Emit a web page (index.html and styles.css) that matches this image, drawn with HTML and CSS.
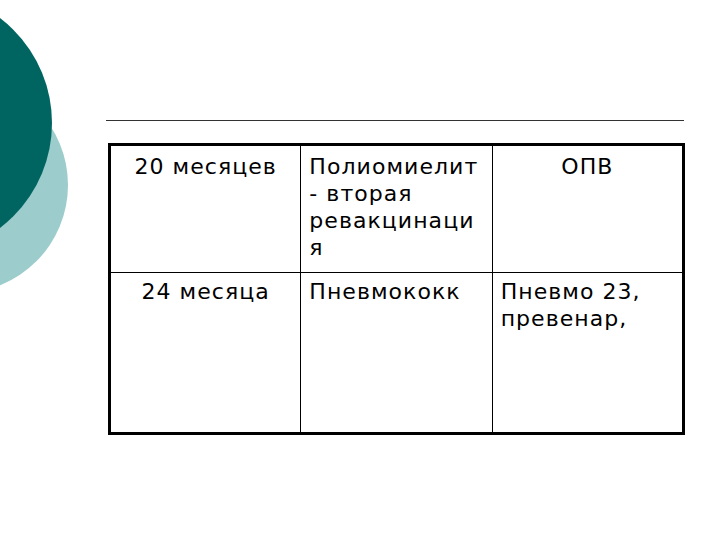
FILE: index.html
```html
<!DOCTYPE html>
<html lang="ru">
<head>
<meta charset="utf-8">
<title>Вакцинация</title>
<link rel="stylesheet" href="styles.css">
</head>
<body>
<div class="slide">
  <div class="circle circle-light"></div>
  <div class="circle circle-dark"></div>
  <div class="content">
    <div class="rule"></div>
    <table class="grid">
      <tr class="row-1">
        <td class="c-age">20 месяцев</td>
        <td class="c-left">Полиомиелит<br>- вторая<br>ревакцинаци<br>я</td>
        <td class="c-center">ОПВ</td>
      </tr>
      <tr class="row-2">
        <td class="c-age">24 месяца</td>
        <td class="c-left">Пневмококк</td>
        <td class="c-left">Пневмо 23,<br>превенар,</td>
      </tr>
    </table>
  </div>
</div>
</body>
</html>
```
FILE: styles.css
```css
html, body {
  margin: 0;
  padding: 0;
  background: #ffffff;
}
.slide {
  position: relative;
  width: 720px;
  height: 540px;
  overflow: hidden;
  font-family: "DejaVu Sans", Verdana, sans-serif;
  color: #000;
}
.circle {
  position: absolute;
  border-radius: 50%;
}
.circle-dark {
  left: -212px;
  top: -9px;
  width: 264px;
  height: 264px;
  background: #006561;
}
.circle-light {
  left: -148px;
  top: 77px;
  width: 216px;
  height: 216px;
  background: #9ccccb;
}
.content {
  position: relative;
  padding: 120px 0 0 108px;
  width: 576px;
}
.rule {
  height: 1px;
  background: #333;
  margin-left: -2px;
}
.grid {
  margin-top: 22px;
  width: 577px;
  border-collapse: collapse;
  border: 3px solid #000;
  table-layout: fixed;
  font-size: 22px;
  line-height: 27px;
  letter-spacing: 1.05px;
}
.grid td {
  border: 1px solid #000;
  vertical-align: top;
  padding: 7px 8px 0 8px;
}
.row-1 td { height: 119px; }
.row-2 td { height: 154px; padding-top: 5px; }
.c-age { text-align: center; }
.c-left { text-align: left; }
.c-center { text-align: center; }
```
